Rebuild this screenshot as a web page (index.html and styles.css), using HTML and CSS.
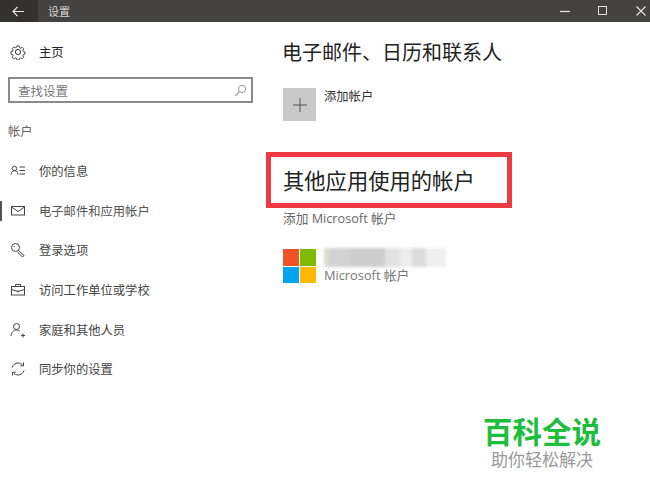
FILE: index.html
```html
<!DOCTYPE html>
<html lang="zh">
<head>
<meta charset="utf-8">
<title>设置</title>
<link rel="stylesheet" href="styles.css">
</head>
<body>
<div class="app">
  <header class="titlebar">
    <div class="back">
      <svg width="12" height="11" viewBox="0 0 12 11"><path d="M5.500.8 1 5.500l4.500 4.700M1 5.500h11" fill="none" stroke="#e8e8e8" stroke-width="1.200"/></svg>
    </div>
    <div class="app-title">设置</div>
    <div class="win-controls">
      <svg class="win-icon" width="10" height="10" viewBox="0 0 10 10"><path d="M0 5.500h10" stroke="#e6e6e6" stroke-width="1.200"/></svg>
      <svg class="win-icon" width="10" height="10" viewBox="0 0 10 10"><rect x=".5" y=".5" width="8" height="8" fill="none" stroke="#e0e0e0" stroke-width="1"/></svg>
      <svg class="win-icon" width="10" height="10" viewBox="0 0 10 10"><path d="M.5.5l9 9M9.500.5l-9 9" stroke="#e6e6e6" stroke-width="1.100"/></svg>
    </div>
  </header>
  <div class="content">
    <aside class="sidebar">
      <div class="home">
        <svg class="icon" width="16" height="16" viewBox="0 0 16 16"><g fill="none" stroke="#333" stroke-width="1"><circle cx="8" cy="8" r="2.600"/><path d="M6.800 1.200h2.400l.4 1.900 1.500.7 1.700-1 1.600 1.700-1 1.600.6 1.500 1.800.4v2.400l-1.800.4-.6 1.500 1 1.600-1.600 1.600-1.700-1-1.500.7-.4 1.800H6.800l-.4-1.800-1.500-.7-1.700 1-1.600-1.600 1-1.600-.6-1.500-1.800-.4V7.600l1.800-.4.6-1.500-1-1.600 1.600-1.700 1.700 1 1.500-.7z" transform="translate(.8 .8) scale(.9)"/></g></svg>
        <span class="home-label">主页</span>
      </div>
      <div class="search">
        <span>查找设置</span>
        <svg width="13" height="13" viewBox="0 0 13 13"><circle cx="8" cy="5" r="3.600" fill="none" stroke="#999"/><path d="M5.400 7.600 1.200 11.800" stroke="#999" stroke-width="1.200"/></svg>
      </div>
      <div class="group-label">帐户</div>
      <nav class="nav">
        <div class="nav-item">
          <svg class="icon" width="16" height="16" viewBox="0 0 16 16"><g fill="none" stroke="#444"><circle cx="4.500" cy="5.500" r="2.200"/><path d="M1 11.500c.3-2.500 1.600-3.800 3.500-3.800s3.200 1.300 3.500 3.800M9.500 4h5.500M9.500 7.500h5.500M9.500 11h5.500"/></g></svg>
          <span>你的信息</span>
        </div>
        <div class="nav-item active">
          <svg class="icon" width="16" height="16" viewBox="0 0 16 16"><g fill="none" stroke="#444"><rect x="1.500" y="3.500" width="13" height="8.500"/><path d="M1.500 4 8 8.500 14.500 4"/></g></svg>
          <span>电子邮件和应用帐户</span>
        </div>
        <div class="nav-item">
          <svg class="icon" width="16" height="16" viewBox="0 0 16 16"><g fill="none" stroke="#444"><circle cx="5.500" cy="5.500" r="4"/><path d="M8.500 8.500 14 13.500 12.500 15 7.500 10M3.800 4.500h1"/></g></svg>
          <span>登录选项</span>
        </div>
        <div class="nav-item">
          <svg class="icon" width="16" height="16" viewBox="0 0 16 16"><g fill="none" stroke="#444"><rect x="1.500" y="4.500" width="13" height="8.500"/><path d="M5.500 4.500V2.500h5v2M1.500 7.500 8 9.500l6.500-2M8 8.500v2"/></g></svg>
          <span>访问工作单位或学校</span>
        </div>
        <div class="nav-item">
          <svg class="icon" width="16" height="16" viewBox="0 0 16 16"><g fill="none" stroke="#444"><circle cx="6.500" cy="4.500" r="3"/><path d="M1 14c.3-3.500 2.500-6 5.500-6 1.500 0 2.700.6 3.500 1.600M11 13.500h4M13 11.500v4"/></g></svg>
          <span>家庭和其他人员</span>
        </div>
        <div class="nav-item">
          <svg class="icon" width="16" height="16" viewBox="0 0 16 16"><g fill="none" stroke="#444"><path d="M2 6.500C2.800 3.800 5.200 2 8 2c2 0 3.800 1 5 2.500M14 9.500c-.8 2.700-3.200 4.500-6 4.500-2 0-3.800-1-5-2.500"/><path d="M13.500 1.500v3.300h-3.300M2.500 14.500v-3.300h3.300"/></g></svg>
          <span>同步你的设置</span>
        </div>
      </nav>
    </aside>
    <main class="main">
      <h2 class="section-title">电子邮件、日历和联系人</h2>
      <div class="add-account">
        <div class="plus-tile">
          <svg width="14" height="14" viewBox="0 0 14 14"><path d="M7 0v14M0 7h14" stroke="#555" stroke-width="1"/></svg>
        </div>
        <span class="add-label">添加帐户</span>
      </div>
      <h2 class="highlight-title">其他应用使用的帐户</h2>
      <div class="add-ms">添加 Microsoft 帐户</div>
      <div class="ms-account">
        <div class="ms-logo">
          <i class="ms-red"></i><i class="ms-green"></i><i class="ms-blue"></i><i class="ms-yellow"></i>
        </div>
        <div class="ms-text">
          <div class="redacted"></div>
          <div class="ms-sub">Microsoft 帐户</div>
        </div>
      </div>
    </main>
  </div>
  <div class="watermark">
    <div class="wm-title">百科全说</div>
    <div class="wm-sub">助你轻松解决</div>
  </div>
</div>
</body>
</html>
```
FILE: styles.css
```css
* { box-sizing: border-box; }
html, body { margin: 0; padding: 0; }
body {
  background: #fff;
  font-family: "Open Sans", "Noto Sans CJK SC", sans-serif;
  color: #333;
}
.app {
  position: relative;
  width: 650px;
  height: 504px;
  overflow: hidden;
  display: flex;
  flex-direction: column;
}
.titlebar {
  height: 22px;
  flex: none;
  display: flex;
  align-items: center;
  background: #444341;
  color: #ddd;
  font-size: 11px;
}
.back {
  width: 38px;
  height: 100%;
  background: #333230;
  display: flex;
  align-items: center;
  justify-content: center;
  padding-right: 2px;
}
.app-title { margin-left: 10px; color: #d4d4d4; }
.win-controls {
  margin-left: auto;
  display: flex;
  gap: 28px;
  padding-right: 4px;
  align-items: center;
}
.win-icon { display: block; }
.content { flex: 1; display: flex; min-height: 0; }
.sidebar { width: 283px; flex: none; padding-top: 20px; }
.icon { display: block; flex: none; }
.home {
  display: flex;
  align-items: center;
  gap: 13px;
  padding-left: 10px;
  height: 20px;
  font-size: 12.300px;
  color: #222;
}
.search {
  margin: 15px 0 0 8px;
  width: 245px;
  height: 26px;
  border: 2px solid #8a8a8a;
  display: flex;
  align-items: center;
  justify-content: space-between;
  padding: 0 4px 0 8px;
  font-size: 12.500px;
  color: #777;
}
.group-label { margin: 20px 0 0 8px; font-size: 12.300px; line-height: 18px; color: #666; }
.nav { margin-top: 10.500px; display: flex; flex-direction: column; }
.nav-item {
  position: relative;
  height: 39.600px;
  display: flex;
  align-items: center;
  gap: 13px;
  padding-left: 10px;
  font-size: 12.300px;
  color: #444;
}
.nav-item.active { color: #555; }
.nav-item.active::before {
  content: "";
  position: absolute;
  left: 0;
  top: 10px;
  width: 2px;
  height: 20px;
  background: #555;
}
.main { flex: 1; min-width: 0; padding-top: 18px; }
.section-title {
  margin: 0 0 0 -1px;
  font-size: 20px;
  line-height: 26px;
  font-weight: 400;
  color: #222;
}
.add-account { display: flex; gap: 8px; margin-top: 22px; }
.plus-tile {
  width: 33px;
  height: 33px;
  background: #c9c9c9;
  display: flex;
  align-items: center;
  justify-content: center;
}
.add-label { font-size: 12.300px; line-height: 16px; margin-top: 1px; color: #333; }
.highlight-title {
  margin: 31px 0 0 -17px;
  width: 246px;
  height: 56px;
  border: 5px solid #ee3a43;
  padding-left: 12px;
  font-size: 21.300px;
  line-height: 47px;
  font-weight: 400;
  color: #222;
}
.add-ms { margin-top: 1px; font-size: 12.700px; line-height: 18px; color: #666; }
.ms-account { display: flex; gap: 8px; margin-top: 22px; }
.ms-logo {
  width: 33px;
  height: 34px;
  display: grid;
  grid-template-columns: 1fr 1fr;
  grid-template-rows: 1fr 1fr;
  gap: 1px;
}
.ms-logo i { display: block; }
.ms-red { background: #f25325; }
.ms-green { background: #80ba01; }
.ms-blue { background: #02a4ef; }
.ms-yellow { background: #ffb902; }
.ms-text { position: relative; }
.redacted {
  width: 122px;
  height: 19px;
  margin-top: -1px;
  background: linear-gradient(90deg, #dcdcd0 0 4%, #d2d2d2 4% 22%, #cdcdcd 22% 50%, #e2e2e2 50% 62%, #ededed 62% 72%, #dcdcdc 72% 84%, #efefef 84%);
  filter: blur(1.500px);
}
.ms-sub { font-size: 12.800px; line-height: 16px; margin-top: 0; color: #777; }
.watermark {
  position: absolute;
  left: 483px;
  top: 415px;
  width: 118px;
  text-align: center;
}
.wm-title {
  font-size: 29.500px;
  line-height: 34px;
  font-weight: 700;
  color: #1cbe3c;
  white-space: nowrap;
}
.wm-sub { font-size: 17px; line-height: 22px; color: #999; white-space: nowrap; }
```
